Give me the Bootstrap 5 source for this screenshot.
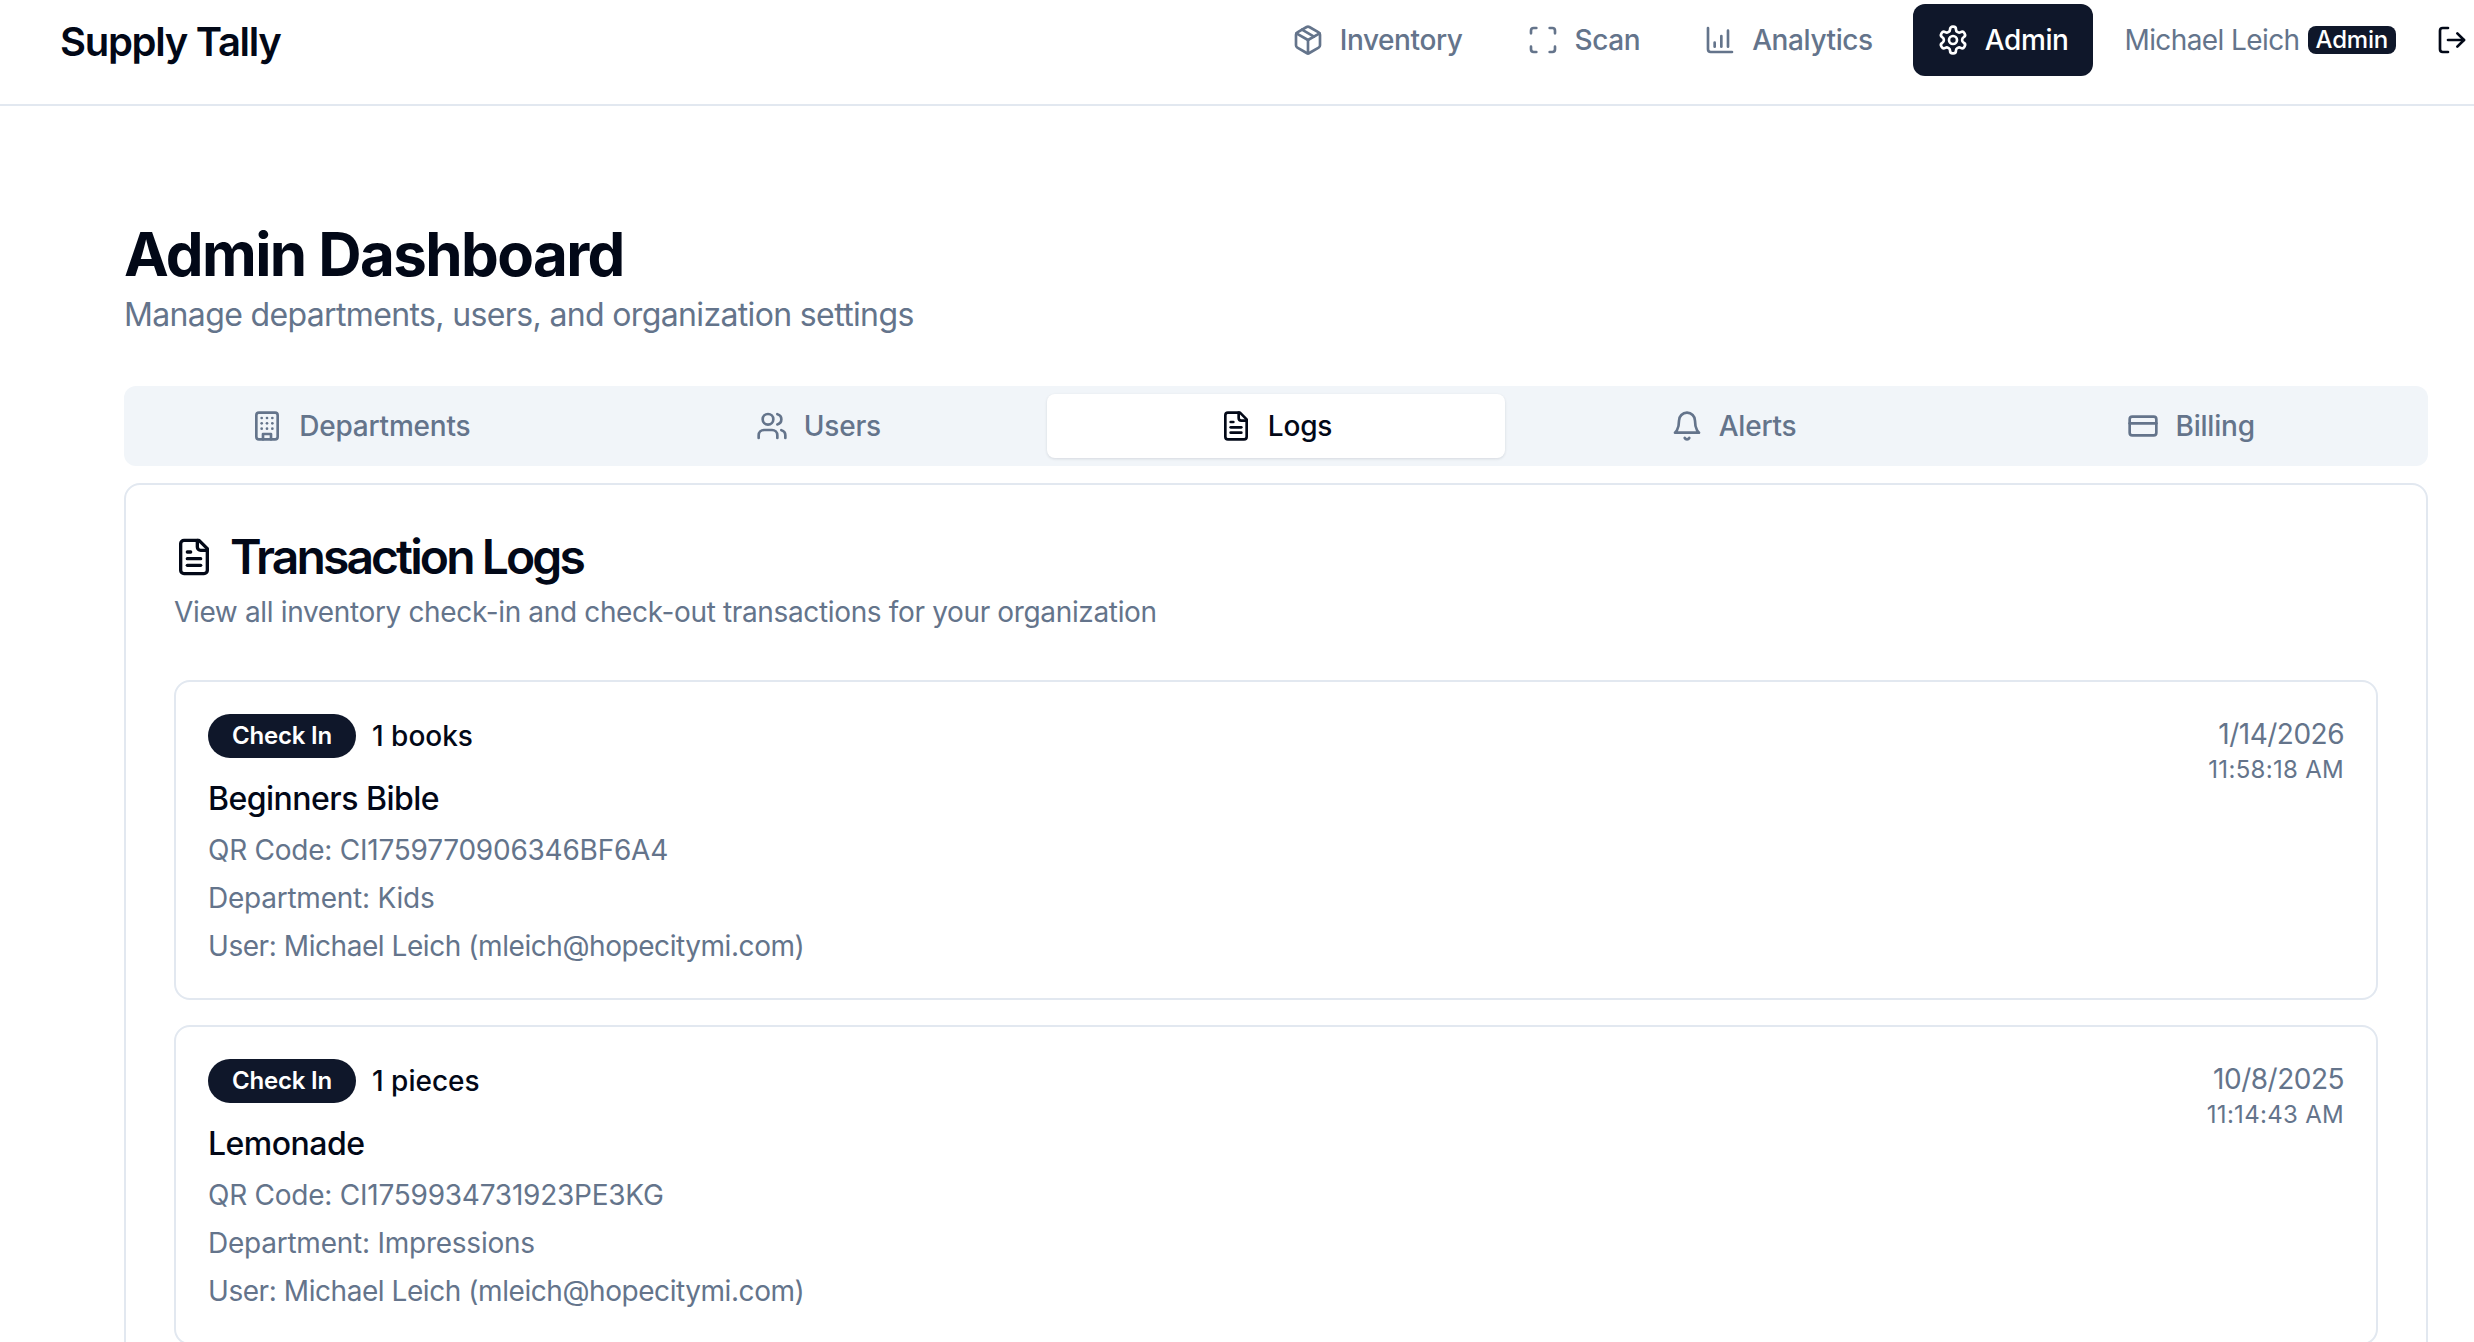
<!DOCTYPE html>
<html lang="en">
<head>
    <meta charset="UTF-8">
    <meta name="viewport" content="width=device-width, initial-scale=1.0">
    <title>Supply Tally - Admin Dashboard</title>
    <link href="https://cdn.jsdelivr.net/npm/bootstrap@5.3.0/dist/css/bootstrap.min.css" rel="stylesheet">
    <style>
        body { font-family: Inter, "Liberation Sans", sans-serif; color: #020817; background: #fff; }
        svg.ico { width: 32px; height: 32px; flex: none; fill: none; stroke: currentColor; stroke-width: 2; stroke-linecap: round; stroke-linejoin: round; }

        .topbar { height: 106px; border-bottom: 2px solid #e2e8f0; padding: 4px 6px 0 60px; align-items: flex-start; }
        .brand-name { font-size: 40px; line-height: 76px; font-weight: 600; letter-spacing: -1.3px; color: #020817; padding: 0; margin: 0; }
        .top-link { height: 72px; padding: 0 24px; gap: 16px; font-size: 28px; font-weight: 500; letter-spacing: -.4px; color: #64748b; border: 0; border-radius: 12px; }
        .top-link.on { background: #0f172a; color: #fff; }
        .who { font-size: 28px; line-height: 72px; letter-spacing: -.6px; color: #64748b; margin-left: 32px; gap: 8px; }
        .who-tag { background: #0f172a; color: #fff; font-size: 24px; font-weight: 500; letter-spacing: -.2px; line-height: 28px; height: 28px; padding: 0 8px; border-radius: 8px; }
        .out-btn { color: #020817; padding: 20px 0 0 0; margin-left: 40px; border: 0; background: none; }

        .page-wrap { padding: 112px 46px 0 124px; }
        .page-title { font-size: 60px; line-height: 72px; font-weight: 700; letter-spacing: -1.6px; margin: 0; }
        .page-sub { font-size: 32px; line-height: 50px; letter-spacing: -.64px; color: #64748b; margin: 0 0 46px; }

        .tab-strip { background: #f1f5f9; border-radius: 12px; padding: 8px; height: 80px; }
        .tab-strip .nav-link { height: 64px; gap: 16px; font-size: 28px; font-weight: 500; letter-spacing: -.2px; color: #64748b; border-radius: 8px; padding: 0; }
        .tab-strip .nav-link.active { background: #fff; color: #020817; box-shadow: 0 1px 3px rgba(15, 23, 42, .12); }

        .log-panel { margin-top: 17px; border: 2px solid #e2e8f0; border-radius: 16px; padding: 48px; }
        .panel-title { font-size: 48px; line-height: 48px; font-weight: 600; letter-spacing: -2.9px; gap: 16px; margin: 0; }
        .panel-title svg.ico { width: 40px; height: 40px; }
        .panel-sub { font-size: 28px; line-height: 40px; letter-spacing: -.35px; color: #64748b; margin: 11px 0 48px; }

        .log-item { border: 2px solid #e2e8f0; border-radius: 16px; padding: 32px; margin-bottom: 24.5px; }
        .kind-pill { background: #0f172a; color: #fff; font-size: 24px; font-weight: 600; letter-spacing: -.2px; line-height: 40px; height: 44px; padding: 0 22px; border: 2px solid transparent; border-radius: 50rem; }
        .qty { font-size: 28px; font-weight: 500; line-height: 44px; }
        .item-name { font-size: 32px; line-height: 48px; font-weight: 500; letter-spacing: -.52px; margin: 17px 0 7px; }
        .item-line { font-size: 28px; line-height: 40px; letter-spacing: -.24px; color: #64748b; margin: 0 0 8px; }
        .item-line:last-child { letter-spacing: -.44px; margin-bottom: 0; }
        .log-date { font-size: 28px; line-height: 40px; letter-spacing: -.5px; color: #64748b; }
        .log-time { font-size: 24px; line-height: 32px; letter-spacing: .3px; color: #64748b; }
    </style>
</head>
<body class="vh-100 overflow-hidden">

    <!-- barra superior -->
    <header class="topbar d-flex justify-content-between">
        <a class="brand-name text-decoration-none" href="#">Supply Tally</a>
        <div class="d-flex">
            <div class="d-flex gap-3">
                <a class="btn top-link d-flex align-items-center" href="#">
                    <svg class="ico" viewBox="0 0 24 24"><path d="M11 21.73a2 2 0 0 0 2 0l7-4A2 2 0 0 0 21 16V8a2 2 0 0 0-1-1.73l-7-4a2 2 0 0 0-2 0l-7 4A2 2 0 0 0 3 8v8a2 2 0 0 0 1 1.73z"/><path d="M12 22V12"/><path d="m3.3 7 8.7 5 8.7-5"/><path d="m7.5 4.27 9 5.15"/></svg>
                    Inventory
                </a>
                <a class="btn top-link d-flex align-items-center" href="#">
                    <svg class="ico" viewBox="0 0 24 24"><path d="M3 7V5a2 2 0 0 1 2-2h2"/><path d="M17 3h2a2 2 0 0 1 2 2v2"/><path d="M21 17v2a2 2 0 0 1-2 2h-2"/><path d="M7 21H5a2 2 0 0 1-2-2v-2"/></svg>
                    Scan
                </a>
                <a class="btn top-link d-flex align-items-center" href="#">
                    <svg class="ico" viewBox="0 0 24 24"><path d="M3 3v16a2 2 0 0 0 2 2h16"/><path d="M18 17V5"/><path d="M13 17V9"/><path d="M8 17v-3"/></svg>
                    Analytics
                </a>
                <a class="btn top-link on d-flex align-items-center" href="#">
                    <svg class="ico" viewBox="0 0 24 24"><path d="M12.22 2h-.44a2 2 0 0 0-2 2v.18a2 2 0 0 1-1 1.73l-.43.25a2 2 0 0 1-2 0l-.15-.08a2 2 0 0 0-2.73.73l-.22.38a2 2 0 0 0 .73 2.73l.15.1a2 2 0 0 1 1 1.72v.51a2 2 0 0 1-1 1.74l-.15.09a2 2 0 0 0-.73 2.73l.22.38a2 2 0 0 0 2.73.73l.15-.08a2 2 0 0 1 2 0l.43.25a2 2 0 0 1 1 1.73V20a2 2 0 0 0 2 2h.44a2 2 0 0 0 2-2v-.18a2 2 0 0 1 1-1.73l.43-.25a2 2 0 0 1 2 0l.15.08a2 2 0 0 0 2.73-.73l.22-.39a2 2 0 0 0-.73-2.73l-.15-.08a2 2 0 0 1-1-1.74v-.5a2 2 0 0 1 1-1.74l.15-.09a2 2 0 0 0 .73-2.73l-.22-.38a2 2 0 0 0-2.73-.73l-.15.08a2 2 0 0 1-2 0l-.43-.25a2 2 0 0 1-1-1.73V4a2 2 0 0 0-2-2z"/><circle cx="12" cy="12" r="3"/></svg>
                    Admin
                </a>
            </div>
            <div class="who d-flex align-items-center">
                <span>Michael Leich</span>
                <span class="who-tag">Admin</span>
            </div>
            <button class="out-btn align-self-start" type="button" aria-label="Sign out">
                <svg class="ico" viewBox="0 0 24 24"><path d="M9 21H5a2 2 0 0 1-2-2V5a2 2 0 0 1 2-2h4"/><polyline points="16 17 21 12 16 7"/><line x1="21" x2="9" y1="12" y2="12"/></svg>
            </button>
        </div>
    </header>

    <main class="page-wrap">
        <h1 class="page-title">Admin Dashboard</h1>
        <p class="page-sub">Manage departments, users, and organization settings</p>

        <ul class="nav nav-pills nav-justified flex-nowrap tab-strip">
            <li class="nav-item">
                <a class="nav-link d-flex align-items-center justify-content-center" href="#">
                    <svg class="ico" viewBox="0 0 24 24"><rect width="16" height="20" x="4" y="2" rx="2" ry="2"/><path d="M9 22v-4h6v4"/><path d="M8 6h.01"/><path d="M16 6h.01"/><path d="M12 6h.01"/><path d="M12 10h.01"/><path d="M12 14h.01"/><path d="M16 10h.01"/><path d="M16 14h.01"/><path d="M8 10h.01"/><path d="M8 14h.01"/></svg>
                    Departments
                </a>
            </li>
            <li class="nav-item">
                <a class="nav-link d-flex align-items-center justify-content-center" href="#">
                    <svg class="ico" viewBox="0 0 24 24"><path d="M16 21v-2a4 4 0 0 0-4-4H6a4 4 0 0 0-4 4v2"/><circle cx="9" cy="7" r="4"/><path d="M22 21v-2a4 4 0 0 0-3-3.87"/><path d="M16 3.13a4 4 0 0 1 0 7.75"/></svg>
                    Users
                </a>
            </li>
            <li class="nav-item">
                <a class="nav-link active d-flex align-items-center justify-content-center" href="#">
                    <svg class="ico" viewBox="0 0 24 24"><path d="M15 2H6a2 2 0 0 0-2 2v16a2 2 0 0 0 2 2h12a2 2 0 0 0 2-2V7Z"/><path d="M14 2v4a2 2 0 0 0 2 2h4"/><path d="M10 9H8"/><path d="M16 13H8"/><path d="M16 17H8"/></svg>
                    Logs
                </a>
            </li>
            <li class="nav-item">
                <a class="nav-link d-flex align-items-center justify-content-center" href="#">
                    <svg class="ico" viewBox="0 0 24 24"><path d="M6 8a6 6 0 0 1 12 0c0 7 3 9 3 9H3s3-2 3-9"/><path d="M10.3 21a1.94 1.94 0 0 0 3.4 0"/></svg>
                    Alerts
                </a>
            </li>
            <li class="nav-item">
                <a class="nav-link d-flex align-items-center justify-content-center" href="#">
                    <svg class="ico" viewBox="0 0 24 24"><rect width="20" height="14" x="2" y="5" rx="2"/><line x1="2" x2="22" y1="10" y2="10"/></svg>
                    Billing
                </a>
            </li>
        </ul>

        <section class="log-panel">
            <h2 class="panel-title d-flex align-items-center">
                <svg class="ico" viewBox="0 0 24 24"><path d="M15 2H6a2 2 0 0 0-2 2v16a2 2 0 0 0 2 2h12a2 2 0 0 0 2-2V7Z"/><path d="M14 2v4a2 2 0 0 0 2 2h4"/><path d="M10 9H8"/><path d="M16 13H8"/><path d="M16 17H8"/></svg>
                Transaction Logs
            </h2>
            <p class="panel-sub">View all inventory check-in and check-out transactions for your organization</p>

            <div class="log-item d-flex justify-content-between align-items-start">
                <div>
                    <div class="d-flex align-items-center gap-3">
                        <span class="kind-pill">Check In</span>
                        <span class="qty">1 books</span>
                    </div>
                    <h3 class="item-name">Beginners Bible</h3>
                    <p class="item-line">QR Code: CI1759770906346BF6A4</p>
                    <p class="item-line">Department: Kids</p>
                    <p class="item-line">User: Michael Leich (mleich@hopecitymi.com)</p>
                </div>
                <div class="text-end">
                    <div class="log-date">1/14/2026</div>
                    <div class="log-time">11:58:18 AM</div>
                </div>
            </div>

            <div class="log-item d-flex justify-content-between align-items-start">
                <div>
                    <div class="d-flex align-items-center gap-3">
                        <span class="kind-pill">Check In</span>
                        <span class="qty">1 pieces</span>
                    </div>
                    <h3 class="item-name">Lemonade</h3>
                    <p class="item-line">QR Code: CI1759934731923PE3KG</p>
                    <p class="item-line">Department: Impressions</p>
                    <p class="item-line">User: Michael Leich (mleich@hopecitymi.com)</p>
                </div>
                <div class="text-end">
                    <div class="log-date">10/8/2025</div>
                    <div class="log-time">11:14:43 AM</div>
                </div>
            </div>
        </section>
    </main>

    <script src="https://cdn.jsdelivr.net/npm/bootstrap@5.3.0/dist/js/bootstrap.bundle.min.js"></script>
</body>
</html>
